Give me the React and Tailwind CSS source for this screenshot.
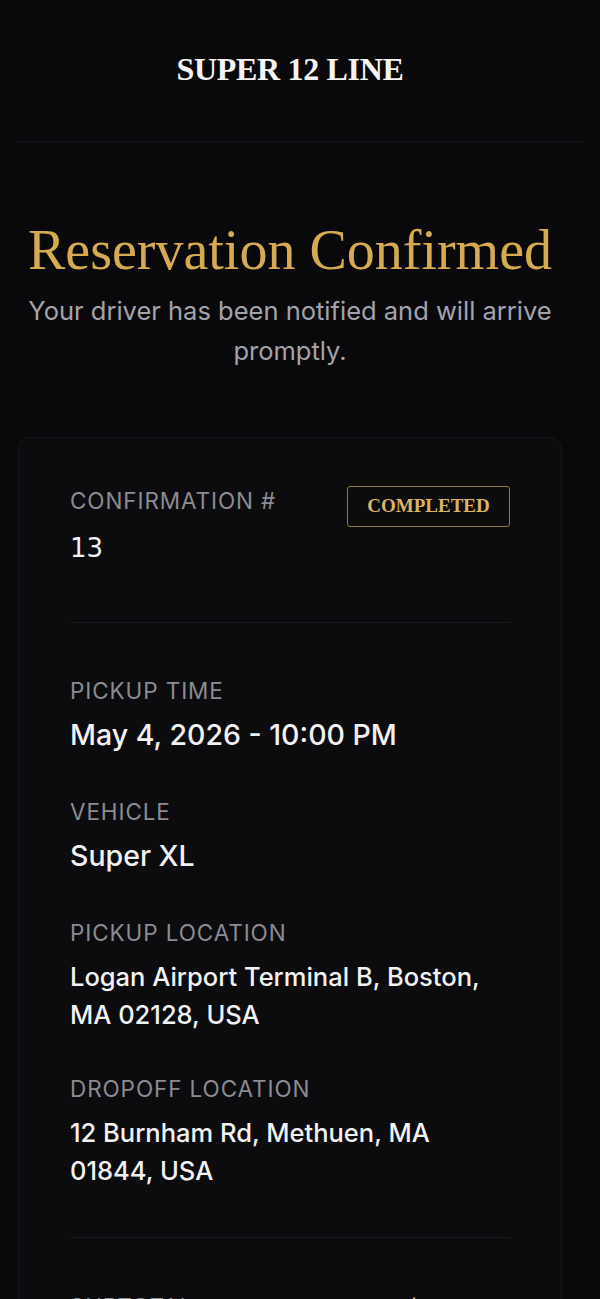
const Label = ({ children }) => (
  <p className="text-[22.5px] leading-[28px] tracking-[0.04em] uppercase text-[#8b8b92]">{children}</p>
);

const Field = ({ label, big, className = '', children }) => (
  <div className={`flex flex-col ${className}`}>
    <Label>{label}</Label>
    <p
      className={`mt-[11px] leading-[38px] font-medium text-[#f2f2f4] ${
        big ? 'text-[28.5px]' : 'text-[25.5px]'
      }`}
    >
      {children}
    </p>
  </div>
);

export default function App() {
  return (
    <div
      className="min-h-screen bg-[#09090b] text-white overflow-hidden"
      style={{ fontFamily: 'Inter, "Noto Sans", sans-serif' }}
    >
      {/* Header */}
      <header className="mx-4 h-[142px] flex items-center justify-center border-b border-[#141418] pb-1 pr-5">
        <h1
          className="text-[32px] font-bold text-[#f4f4f4] tracking-[-0.01em]"
          style={{ fontFamily: '"Liberation Serif", serif' }}
        >
          SUPER 12 LINE
        </h1>
      </header>

      <div className="w-[580px]">
        {/* Hero */}
        <div className="px-6 pt-[75px] text-center">
          <h2
            className="text-[56px] leading-[67px] text-[#d6ab50]"
            style={{ fontFamily: '"Liberation Serif", serif' }}
          >
            Reservation Confirmed
          </h2>
          <p className="mt-[7px] text-[25.5px] leading-[40px] text-[#a3a3ab]">
            Your driver has been notified and will arrive promptly.
          </p>
        </div>

        {/* Details card */}
        <div className="mx-[18px] mt-[66px] rounded-xl border border-[#17171b] bg-[#0c0c0f] px-[51px] pt-[49px] pb-10">
          <div className="flex items-start justify-between">
            <div>
              <Label>Confirmation #</Label>
              <p
                className="mt-[16px] text-[26px] leading-[34px] text-[#f2f2f4]"
                style={{ fontFamily: '"DejaVu Sans", sans-serif' }}
              >
                13
              </p>
            </div>
            <span
              className="mt-[-1px] w-[163px] h-[41px] flex items-center justify-center rounded-[3px] border-[1.5px] border-[#9a7a3e] text-[19px] font-bold text-[#d8b463]"
              style={{ fontFamily: '"Liberation Serif", serif' }}
            >
              COMPLETED
            </span>
          </div>

          <div className="mt-[57px] h-px bg-[#1a1a1f]" />

          <div className="mt-[54px] flex flex-col">
            <Field label="Pickup Time" big>May 4, 2026 - 10:00 PM</Field>
            <Field label="Vehicle" big className="mt-[44px]">Super XL</Field>
            <Field label="Pickup Location" className="mt-[44px]">
              Logan Airport Terminal B, Boston, MA 02128, USA
            </Field>
            <Field label="Dropoff Location" className="mt-[41px]">
              12 Burnham Rd, Methuen, MA 01844, USA
            </Field>
          </div>

          <div className="mt-[47px] h-px bg-[#1a1a1f]" />

          <div className="mt-[55px] flex items-start justify-between">
            <Label>Subtotal</Label>
            <p className="text-[25.5px] leading-[34px] font-medium text-[#f2f2f4]">$240.00</p>
          </div>
        </div>
      </div>
    </div>
  );
}
